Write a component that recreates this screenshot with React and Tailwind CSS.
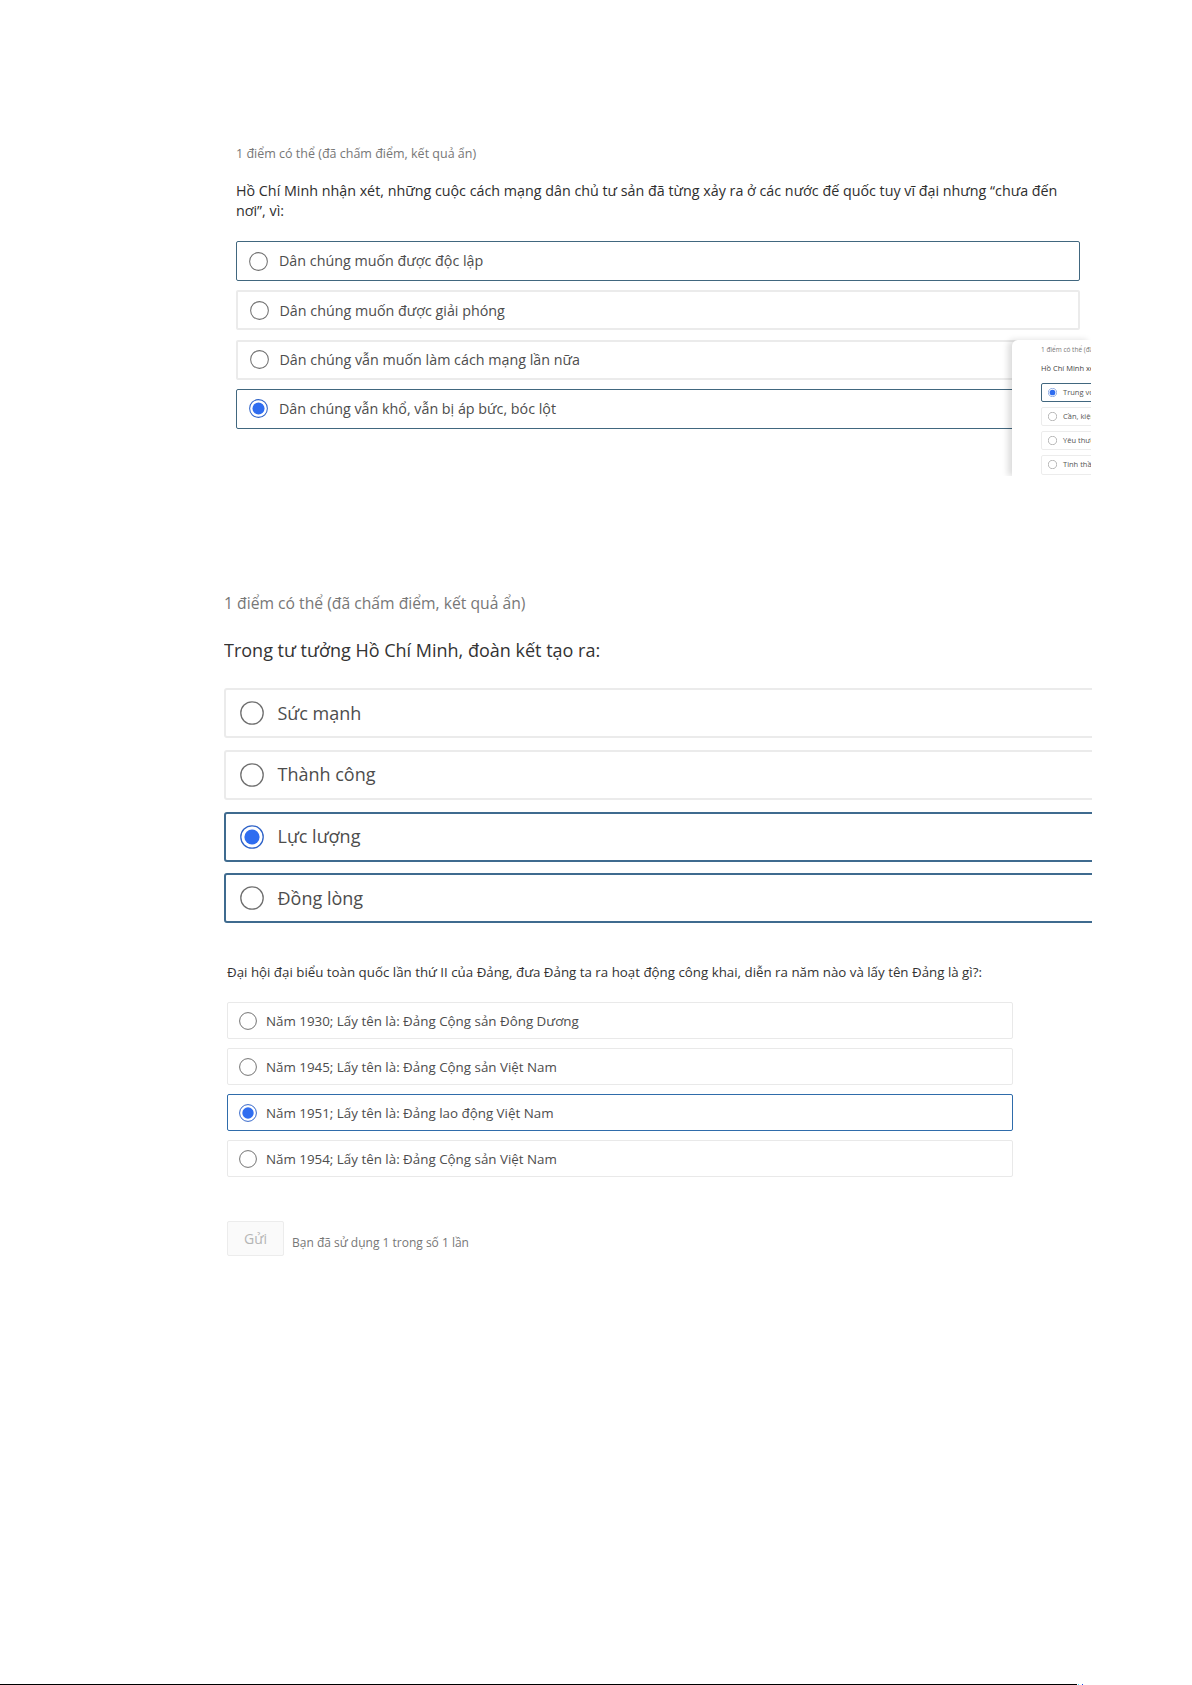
import React from 'react';

const firstOptions = [
  { text: 'Dân chúng muốn được độc lập', outlined: true },
  { text: 'Dân chúng muốn được giải phóng' },
  { text: 'Dân chúng vẫn muốn làm cách mạng lần nữa' },
  { text: 'Dân chúng vẫn khổ, vẫn bị áp bức, bóc lột', outlined: true, checked: true },
];

const secondOptions = [
  { text: 'Sức mạnh' },
  { text: 'Thành công' },
  { text: 'Lực lượng', outlined: true, checked: true },
  { text: 'Đồng lòng', outlined: true },
];

const thirdOptions = [
  { text: 'Năm 1930; Lấy tên là: Đảng Cộng sản Đông Dương' },
  { text: 'Năm 1945; Lấy tên là: Đảng Cộng sản Việt Nam' },
  { text: 'Năm 1951; Lấy tên là: Đảng lao động Việt Nam', outlined: true, checked: true },
  { text: 'Năm 1954; Lấy tên là: Đảng Cộng sản Việt Nam' },
];

const miniOptions = [
  { text: 'Trung với', outlined: true, checked: true },
  { text: 'Cần, kiệm' },
  { text: 'Yêu thương' },
  { text: 'Tinh thần' },
];

// radio drawn with svg so the ring stays thin at every size
const Radio = ({ checked, size }) => (
  <svg width={size} height={size} viewBox="0 0 24 24" className="shrink-0">
    <circle cx="12" cy="12" r="11.2" fill="#fff" stroke={checked ? '#2f63c8' : '#6f6f6f'} strokeWidth="1.3" />
    {checked && <circle cx="12" cy="12" r="7.6" fill="#2f6df0" />}
  </svg>
);

const App = () => {
  return (
    <div className="relative flex h-[1685px] w-[1192px] flex-col overflow-hidden bg-white font-['Open_Sans',sans-serif]">
      {/* first question, with the pasted thumbnail lying over it */}
      <section className="relative ml-[236px] mt-[130px] h-[346px] w-[855px] overflow-hidden">
        <div className="w-[844px]">
          <p className="mt-[14px] text-[12.5px] leading-5 text-[#777]">1 điểm có thể (đã chấm điểm, kết quả ẩn)</p>
          <p className="mt-[16.5px] text-[14.3px] leading-[20px] text-[#2e2e2e]">
            Hồ Chí Minh nhận xét, những cuộc cách mạng dân chủ tư sản đã từng xảy ra ở các nước đế quốc tuy vĩ đại nhưng “chưa đến nơi”, vì:
          </p>
          <div className="mt-[20.5px] flex flex-col gap-[9.3px]">
            {firstOptions.map((o) => (
              <div
                key={o.text}
                className={`flex h-[40px] items-center gap-[11px] rounded-[2px] bg-white text-[14.3px] text-[#4d4d4d] ${
                  o.outlined ? 'border-[1.5px] border-[#41677f] pl-[12px]' : 'border-2 border-[#ebebeb] pl-[11.5px]'
                }`}
              >
                <Radio checked={o.checked} size={19} />
                <span>{o.text}</span>
              </div>
            ))}
          </div>
        </div>

        <div className="absolute left-[776px] top-[210px] h-[136px] w-[79px] overflow-hidden rounded-tl-[6px] bg-white pl-[29px] shadow-[-4px_0_6px_rgba(0,0,0,0.14)]">
          <p className="mt-[5px] whitespace-nowrap text-[6.5px] leading-[9px] text-[#777]">1 điểm có thể (đã chấm điểm)</p>
          <p className="mt-[9px] whitespace-nowrap text-[7.5px] leading-[10px] text-[#444]">Hồ Chí Minh xem</p>
          <div className="mt-[9.5px] flex w-[120px] flex-col gap-[4.7px]">
            {miniOptions.map((o) => (
              <div
                key={o.text}
                className={`flex h-[19.5px] items-center gap-[6px] rounded-[2px] pl-[6px] text-[7.5px] text-[#555] ${
                  o.outlined ? 'border border-[#41677f]' : 'border border-[#ececec]'
                }`}
              >
                <Radio checked={o.checked} size={9} />
                <span className="whitespace-nowrap">{o.text}</span>
              </div>
            ))}
          </div>
        </div>
      </section>

      {/* second question, cut off at the right edge */}
      <section className="ml-[224px] mt-[114px] w-[868px] overflow-hidden">
        <div className="w-[900px]">
          <p className="text-[15.7px] leading-[26px] text-[#777]">1 điểm có thể (đã chấm điểm, kết quả ẩn)</p>
          <p className="mt-[20px] text-[18px] leading-[28px] text-[#333]">Trong tư tưởng Hồ Chí Minh, đoàn kết tạo ra:</p>
          <div className="mt-[24px] flex flex-col gap-[11.8px]">
            {secondOptions.map((o) => (
              <div
                key={o.text}
                className={`flex h-[50px] items-center gap-[13.5px] rounded-[3px] border-2 bg-white pl-[14px] text-[18px] text-[#4d4d4d] ${
                  o.outlined ? 'border-[#3f6b8f]' : 'border-[#ebebeb]'
                }`}
              >
                <Radio checked={o.checked} size={24} />
                <span>{o.text}</span>
              </div>
            ))}
          </div>
        </div>
      </section>

      {/* third question */}
      <section className="ml-[227px] mt-[39px] w-[786px]">
        <p className="whitespace-nowrap text-[13.32px] leading-5 text-[#333]">
          Đại hội đại biểu toàn quốc lần thứ II của Đảng, đưa Đảng ta ra hoạt động công khai, diễn ra năm nào và lấy tên Đảng là gì?:
        </p>
        <div className="mt-[20px] flex flex-col gap-[9px]">
          {thirdOptions.map((o) => (
            <div
              key={o.text}
              className={`flex h-[37px] items-center gap-[9.5px] rounded-[2px] bg-white pl-[10.5px] text-[13.37px] text-[#4d4d4d] ${
                o.outlined ? 'border border-[#2f6cab]' : 'border-[1.5px] border-[#e9e9e9]'
              }`}
            >
              <Radio checked={o.checked} size={18} />
              <span>{o.text}</span>
            </div>
          ))}
        </div>
        <div className="mt-[44px] flex items-start gap-[8px]">
          <button disabled className="h-[35px] w-[57px] rounded-[2px] border border-[#ececec] bg-[#fafafa] text-[14px] text-[#b5b5b5]">
            Gửi
          </button>
          <span className="mt-[12px] text-[12px] leading-5 text-[#777]">Bạn đã sử dụng 1 trong số 1 lần</span>
        </div>
      </section>

      <div className="mt-auto flex h-px">
        <div className="w-[1077px] bg-black" />
        <div className="ml-px w-px bg-cyan-300" />
        <div className="ml-[3px] w-px bg-blue-700" />
      </div>
    </div>
  );
};

export default App;
